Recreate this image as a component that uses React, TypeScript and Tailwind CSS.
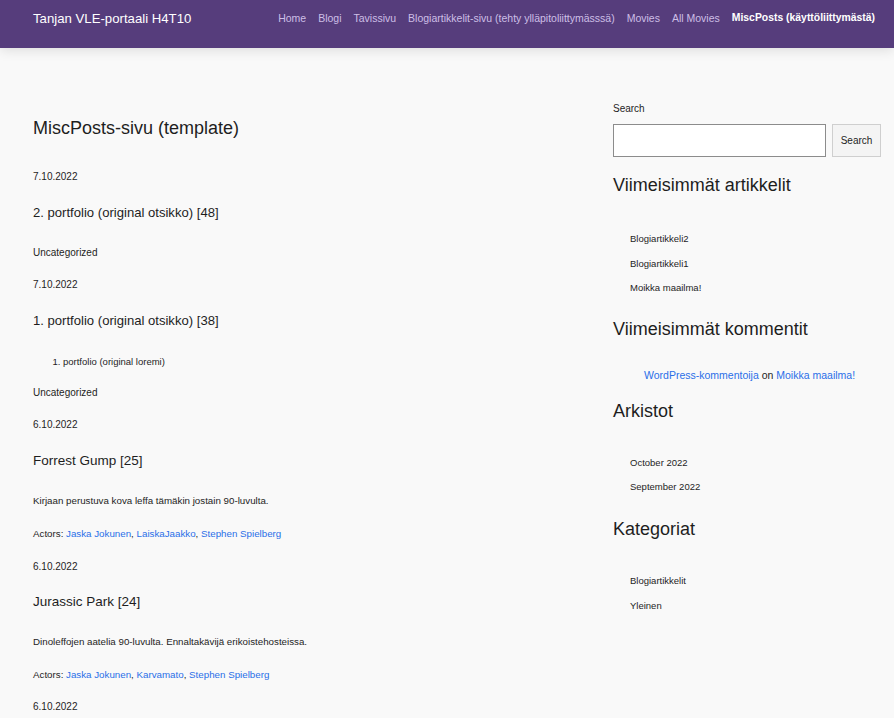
import React from "react";

const navLinks = [
    "Home",
    "Blogi",
    "Tavissivu",
    "Blogiartikkelit-sivu (tehty ylläpitoliittymässsä)",
    "Movies",
    "All Movies",
];

function Link({ children }: { children: React.ReactNode }) {
    return <a className="text-[#2a6fe8]">{children}</a>;
}

function Date({ d }: { d: string }) {
    return <div className="text-[10px] leading-[12px] h-[12px]">{d}</div>;
}

function PostTitle({ t, tight, small }: { t: string; tight?: boolean; small?: boolean }) {
    return (
        <h2 className={`${small ? "text-[13.1px]" : "text-[13.5px]"} leading-[16px] ${tight ? "mt-[21px]" : "mt-[22px]"}`}>
            {t}
        </h2>
    );
}

function WidgetTitle({ t }: { t: string }) {
    return <h2 className="text-[18px] leading-[20px]">{t}</h2>;
}

export default function App() {
    return (
        <div className="min-h-screen bg-[#f9f9f9] text-[#1e1e1e] font-['Liberation_Sans',Arial,sans-serif]">
            <header className="bg-[#563d7c] h-[48px] flex items-center pl-[33px] shadow-[0_2px_12px_rgba(0,0,0,0.12)]">
                <div className="text-white text-[13.2px] leading-[16px] mb-[11px]">Tanjan VLE-portaali H4T10</div>
                <nav className="flex gap-[12px] text-[10.5px] leading-[12px] mb-[12px] ml-auto pr-[19px] whitespace-nowrap">
                    {navLinks.map((l) => (
                        <a key={l} className="text-[#cdbfe6]">{l}</a>
                    ))}
                    <a className="text-white font-bold text-[10.4px]">MiscPosts (käyttöliittymästä)</a>
                </nav>
            </header>

            <div className="flex pl-[33px] pt-[53px]">
                <main className="w-[580px]">
                    <h1 className="text-[18px] leading-[20px] mt-[17px]">MiscPosts-sivu (template)</h1>

                    <div className="mt-[33px]"><Date d="7.10.2022" /></div>
                    <PostTitle t="2. portfolio (original otsikko) [48]" small />
                    <div className="text-[10px] leading-[12px] mt-[26px]">Uncategorized</div>

                    <div className="mt-[20px]"><Date d="7.10.2022" /></div>
                    <PostTitle t="1. portfolio (original otsikko) [38]" small />
                    <ol className="list-decimal pl-[30px] mt-[27px] text-[9.5px] leading-[12px]">
                        <li>portfolio (original loremi)</li>
                    </ol>
                    <div className="text-[10px] leading-[12px] mt-[19px]">Uncategorized</div>

                    <div className="mt-[20px]"><Date d="6.10.2022" /></div>
                    <PostTitle t="Forrest Gump [25]" />
                    <p className="text-[9.75px] leading-[12px] mt-[26px]">Kirjaan perustuva kova leffa tämäkin jostain 90-luvulta.</p>
                    <p className="text-[9.75px] leading-[12px] mt-[21px]">
                        Actors: <Link>Jaska Jokunen</Link>, <Link>LaiskaJaakko</Link>, <Link>Stephen Spielberg</Link>
                    </p>

                    <div className="mt-[21px]"><Date d="6.10.2022" /></div>
                    <PostTitle t="Jurassic Park [24]" tight />
                    <p className="text-[9.75px] leading-[12px] mt-[26px]">Dinoleffojen aatelia 90-luvulta. Ennaltakävijä erikoistehosteissa.</p>
                    <p className="text-[9.75px] leading-[12px] mt-[21px]">
                        Actors: <Link>Jaska Jokunen</Link>, <Link>Karvamato</Link>, <Link>Stephen Spielberg</Link>
                    </p>

                    <div className="mt-[20px]"><Date d="6.10.2022" /></div>
                </main>

                <aside className="w-[268px]">
                    <label className="block text-[10px] leading-[12px] mt-[2px]">Search</label>
                    <div className="flex gap-[6px] mt-[9px]">
                        <input className="w-[213px] h-[33px] border border-[#8c8c8c] bg-white" />
                        <button className="w-[49px] h-[33px] border border-[#cfcfcf] bg-[#f4f4f4] text-[10px] text-[#1e1e1e]">Search</button>
                    </div>

                    <div className="mt-[18px]"><WidgetTitle t="Viimeisimmät artikkelit" /></div>
                    <ul className="pl-[17px] mt-[38px] text-[9.5px] leading-[12px] flex flex-col gap-[12.5px]">
                        <li>Blogiartikkeli2</li>
                        <li>Blogiartikkeli1</li>
                        <li>Moikka maailma!</li>
                    </ul>

                    <div className="mt-[25px]"><WidgetTitle t="Viimeisimmät kommentit" /></div>
                    <div className="pl-[31px] mt-[30px] text-[10.5px] leading-[12px]">
                        <Link>WordPress-kommentoija</Link> on <Link>Moikka maailma!</Link>
                    </div>

                    <div className="mt-[20px]"><WidgetTitle t="Arkistot" /></div>
                    <ul className="pl-[17px] mt-[36px] text-[9.5px] leading-[12px] flex flex-col gap-[12px]">
                        <li>October 2022</li>
                        <li>September 2022</li>
                    </ul>

                    <div className="mt-[26px]"><WidgetTitle t="Kategoriat" /></div>
                    <ul className="pl-[17px] mt-[36px] text-[9.5px] leading-[12px] flex flex-col gap-[13px]">
                        <li>Blogiartikkelit</li>
                        <li>Yleinen</li>
                    </ul>
                </aside>
            </div>
        </div>
    );
}
